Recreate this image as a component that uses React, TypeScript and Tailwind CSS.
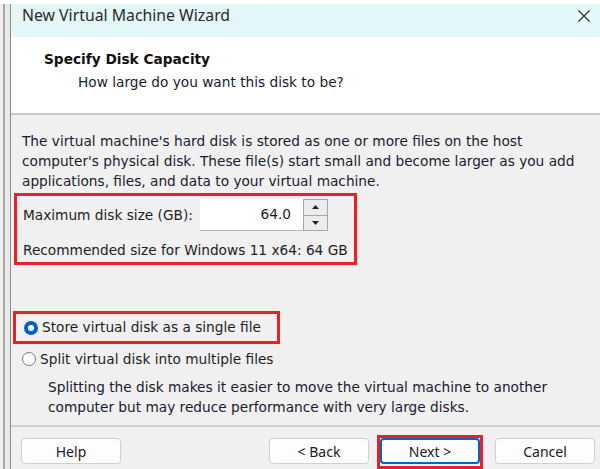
import React from 'react';

const font = { fontFamily: '"DejaVu Sans", Verdana, sans-serif' };
const ui = { fontFamily: '"Noto Sans", "Open Sans", sans-serif' };

const Button: React.FC<{ label: string; focused?: boolean; className?: string }> = ({ label, focused, className }) => (
  <div
    style={ui}
    className={
      'h-[26px] w-[100px] rounded-[4px] bg-[#fdfdfd] flex items-center justify-center text-[14px] text-[#1a1a1a] ' +
      (focused ? 'border-2 border-[#0067c0] ' : 'border border-[#d0d0d0] ') +
      (className ?? '')
    }
  >
    {label}
  </div>
);

const Radio: React.FC<{ checked?: boolean }> = ({ checked }) =>
  checked ? (
    <span className="w-[14px] h-[14px] rounded-full bg-[#0060c0] flex items-center justify-center shrink-0">
      <span className="w-[6px] h-[6px] rounded-full bg-white" />
    </span>
  ) : (
    <span className="w-[14px] h-[14px] rounded-full border border-[#7a7a7a] bg-white shrink-0" />
  );

export default function App() {
  return (
    <div className="w-[600px] h-[469px] overflow-hidden flex flex-col bg-white text-[#1e1e1e] text-[13.7px]" style={font}>
      <div className="h-[4px] bg-white shrink-0" />
      <div className="flex flex-1 min-h-0">
        {/* edge of the window behind */}
        <div className="w-[11px] shrink-0 flex bg-[#e6e6e6]">
          <div className="w-[3px] bg-[#f0f0f0]" />
          <div className="w-[2px] bg-[#a8a8a8]" />
          <div className="w-[5px] bg-[#e9e9e9]" />
          <div className="w-[1px] bg-[#8a8a8a]" />
        </div>
        <div className="flex-1 flex flex-col">
          {/* title bar */}
          <div className="h-[33px] bg-[#e3f6f8] flex items-start justify-between pl-[11px] pr-[8px] shrink-0">
            <span className="text-[15.8px] leading-[22px] text-[#2a2a2a]" style={ui}>New Virtual Machine Wizard</span>
            <svg width="14" height="14" viewBox="0 0 14 14" className="mr-[1px] mt-[5px]">
              <path d="M1.5 1.5 L12.5 12.5 M12.5 1.5 L1.5 12.5" stroke="#333" strokeWidth="1.3" />
            </svg>
          </div>
          {/* header */}
          <div className="h-[78px] bg-white pl-[33px] pt-[12px] border-b-2 border-[#c8c8c8] shrink-0">
            <div className="font-bold text-[#111]">Specify Disk Capacity</div>
            <div className="pl-[34px] mt-[2px] text-[#1a1a2e]">How large do you want this disk to be?</div>
          </div>
          {/* body */}
          <div className="flex-1 bg-[#f0f0f0] flex flex-col">
            <div className="pl-[11px] pt-[16px] leading-[20px] text-[#1a1a2e]">
              <p>The virtual machine's hard disk is stored as one or more files on the host</p>
              <p>computer's physical disk. These file(s) start small and become larger as you add</p>
              <p>applications, files, and data to your virtual machine.</p>
            </div>
            <div className="ml-[3px] mt-[2px] w-[343px] h-[72px] border-[3px] border-[#e8202a] pl-[6px] pt-[3px]">
              <div className="flex items-center">
                <span className="w-[177px]">Maximum disk size (GB):</span>
                <div className="w-[103px] h-[32px] bg-white border-b border-[#b8b8b8] flex items-center justify-end pr-[12px]">
                  64.0
                </div>
                <div className="w-[25px] h-[32px] flex flex-col border border-[#a8a8a8] bg-[#ececec]">
                  <div className="flex-1 flex items-center justify-center border-b border-[#a8a8a8]">
                    <svg width="7" height="4" viewBox="0 0 7 4"><path d="M3.5 0 L7 4 L0 4 Z" fill="#222" /></svg>
                  </div>
                  <div className="flex-1 flex items-center justify-center">
                    <svg width="7" height="4" viewBox="0 0 7 4"><path d="M0 0 L7 0 L3.5 4 Z" fill="#222" /></svg>
                  </div>
                </div>
              </div>
              <div className="mt-[9px]">Recommended size for Windows 11 x64: 64 GB</div>
            </div>
            <div className="ml-[2px] mt-[46px] w-[267px] h-[33px] border-[3px] border-[#e8202a] flex items-center pl-[8px] gap-[4px]">
              <Radio checked />
              <span>Store virtual disk as a single file</span>
            </div>
            <div className="flex items-center pl-[11px] gap-[4px] mt-[5px]">
              <Radio />
              <span>Split virtual disk into multiple files</span>
            </div>
            <div className="pl-[37px] mt-[7px] leading-[20px] text-[#1a1a2e]">
              <p>Splitting the disk makes it easier to move the virtual machine to another</p>
              <p>computer but may reduce performance with very large disks.</p>
            </div>
            <div className="mt-auto border-t-2 border-[#cfcfcf] h-[44px] flex items-start pt-[11px] pl-[10px]">
              <Button label="Help" />
              <Button label="< Back" className="ml-[148px]" />
              <div className="relative ml-[11px]">
                <Button label="Next >" focused />
                <div className="absolute -left-[3px] -right-[3px] -top-[3px] -bottom-[5px] border-[3px] border-[#e8202a]" />
              </div>
              <Button label="Cancel" className="ml-[15px]" />
            </div>
          </div>
        </div>
      </div>
    </div>
  );
}
